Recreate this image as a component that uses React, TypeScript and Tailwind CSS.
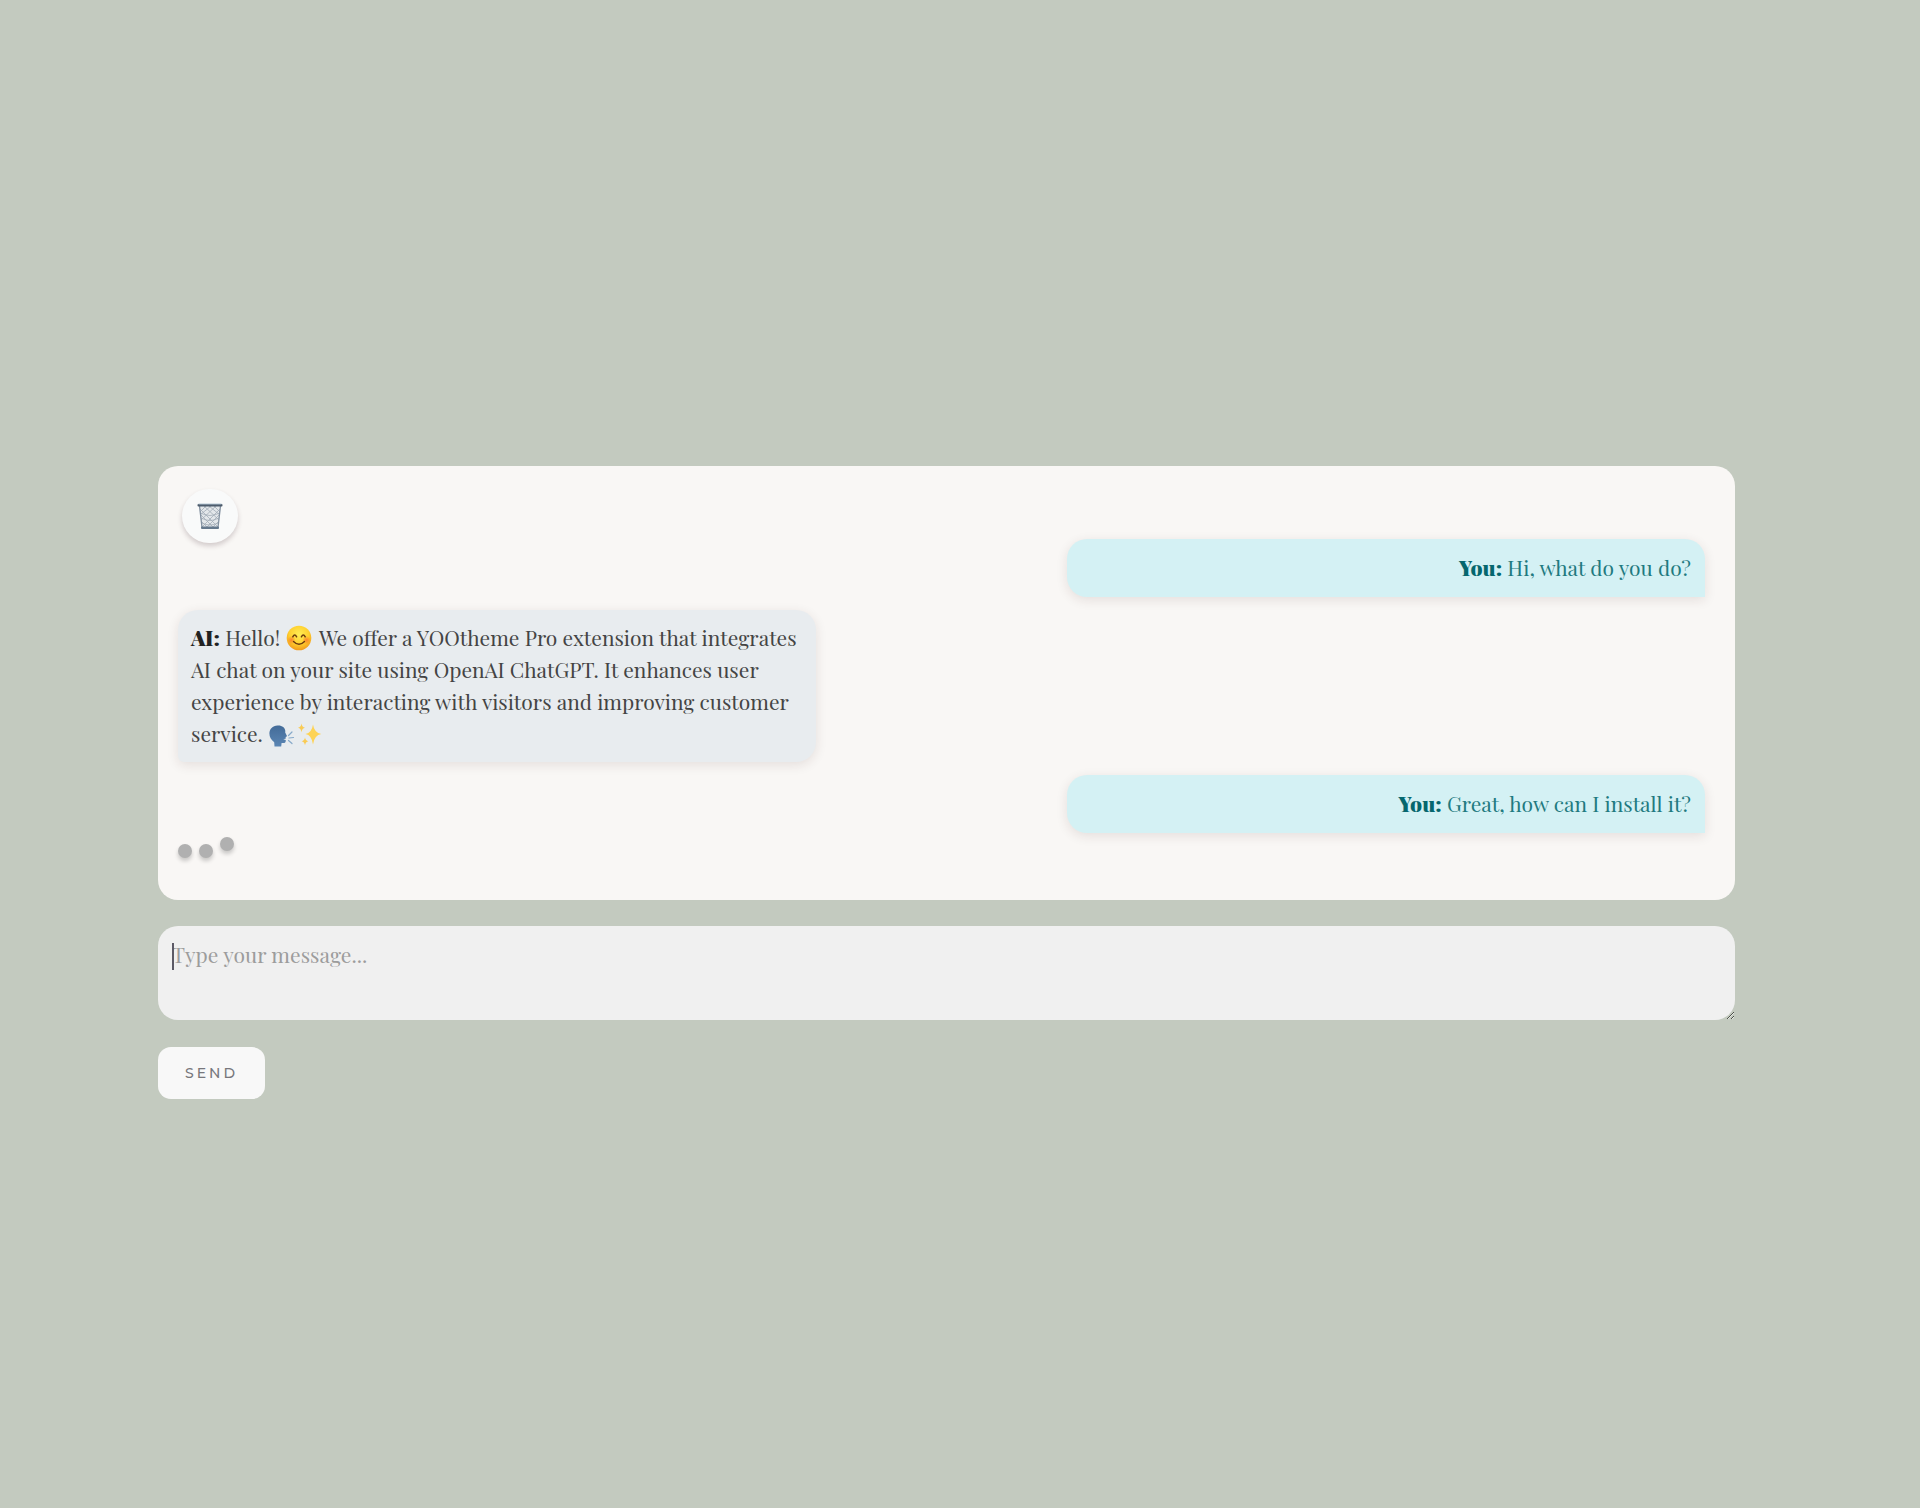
import React from "react";

function TrashIcon() {
  return (
    <svg viewBox="0 0 26 27" className="h-[27px] w-[26px]" aria-hidden="true">
      <path d="M2 2.500 5 25h16l3-22.500Z" fill="#e3e7ea" />
      <g fill="none" stroke="#a3adb7" strokeWidth="0.8">
        <path d="M3 6 21 24M7 3l15 14M12 3l11 9M17 3l6 6M4 12l12 12M5 19l6 6" />
        <path d="M23 6 5 24M19 3 4 17M14 3 3 12M9 3 3 9M22 12 10 24M21 19l-6 6" />
        <path d="M3.500 10q9.500 5 19 0M4.200 15q8.800 5 17.600 0M4.800 20q8.200 4 16.400 0" />
      </g>
      <path d="M2.500 3 5 24.500M23.500 3 21 24.500" stroke="#8492a1" strokeWidth="1.300" />
      <rect x="0.500" y="1" width="25" height="2.600" rx="1" fill="#4d5c6c" />
      <rect x="1.500" y="0.600" width="23" height="0.900" fill="#a9bccb" />
      <rect x="4" y="23.600" width="18" height="2.500" rx="1" fill="#64788c" />
    </svg>
  );
}

function SmileEmoji() {
  return (
    <svg viewBox="0 0 26 26" className="mr-0.5 ml-px inline-block h-[26px] w-[26px] align-[-5px]" role="img" aria-label="smiling face">
      <defs>
        <radialGradient id="face" cx="0.5" cy="0.35" r="0.65">
          <stop offset="0" stopColor="#ffed55" />
          <stop offset="0.6" stopColor="#ffd02f" />
          <stop offset="1" stopColor="#f29a1b" />
        </radialGradient>
        <radialGradient id="cheek">
          <stop offset="0" stopColor="#fb6a2c" stopOpacity="0.75" />
          <stop offset="1" stopColor="#fb6a2c" stopOpacity="0" />
        </radialGradient>
      </defs>
      <circle cx="13" cy="13" r="12.3" fill="url(#face)" />
      <circle cx="5.500" cy="15" r="4.200" fill="url(#cheek)" />
      <circle cx="20.500" cy="15" r="4.200" fill="url(#cheek)" />
      <g fill="none" stroke="#6b3a0e" strokeLinecap="round">
        <path d="M6.800 11.800q1.900-3.600 3.800 0M15.400 11.800q1.900-3.600 3.800 0" strokeWidth="1.500" />
        <path d="M7.500 16.500q5.500 5.600 11 0" strokeWidth="1.400" />
      </g>
    </svg>
  );
}

function SpeakingHeadEmoji() {
  return (
    <svg viewBox="0 0 26 22" className="mr-0.5 ml-px inline-block h-[22px] w-[26px] align-[-5px]" role="img" aria-label="speaking head">
      <defs>
        <linearGradient id="head" x1="0" y1="0" x2="0" y2="1">
          <stop offset="0" stopColor="#436b98" />
          <stop offset="1" stopColor="#5b86b4" />
        </linearGradient>
      </defs>
      <path
        d="M8.500.5C13 .2 16 2.500 16.300 6l-.1 1.500 1.700 3.200c.2.500 0 .8-.6 1l-.7.200.3 1.500-2.600.8 2.500.8-.2 1.800c-.3 1.200-1.400 1.300-4 1.100l-.4 3.700H5.500l-.3-4.300C2 14.800.4 12 .4 8.600.4 4 3.600.8 8.500.5Z"
        fill="url(#head)"
      />
      <g fill="none" stroke="#86a9c9" strokeLinecap="round" strokeWidth="1.200">
        <path d="m19.500 10.500 3.500-3.500M20 13l4.500-.5M19.500 15.500l3.500 3" />
      </g>
    </svg>
  );
}

function SparklesEmoji() {
  return (
    <svg viewBox="0 0 25 23" className="inline-block h-[23px] w-[25px] align-[-4px]" role="img" aria-label="sparkles">
      <path d="M16 1.500q1.200 8.300 8.300 9.500-7.100 1.200-8.300 10.500Q14.800 12.200 8.500 11 14.800 9.800 16 1.500Z" fill="#fdd356" />
      <path d="M4.500.5q.6 3.800 3.500 4.300-2.900.5-3.500 4.400Q3.900 5.300 1 4.800 3.900 4.300 4.500.5Z" fill="#f9cb55" />
      <path d="M8 14.500q.6 3.300 3.300 3.800-2.700.5-3.300 3.900-.6-3.400-3.300-3.900 2.700-.5 3.300-3.800Z" fill="#f9cb55" />
    </svg>
  );
}

function UserMessage({ children }: { children: React.ReactNode }) {
  return (
    <div className="w-[41.8%] self-end rounded-[20px] rounded-br-none bg-[#d4f1f4] px-[14px] pt-3 pb-[14px] text-right text-[#1f7a80] shadow-[0_3px_12px_rgba(60,30,30,0.11)]">
      <strong className="font-black text-[#05676e]">You:</strong> {children}
    </div>
  );
}

export default function App() {
  return (
    <main className="flex min-h-screen flex-col items-stretch bg-[#c3cabf] pt-[466px] pr-[185px] pl-[158px] font-['Playfair_Display','Liberation_Serif',serif] text-[21px] leading-8">
      <section aria-label="Conversation" className="flex flex-col gap-[13px] rounded-[20px] bg-[#f9f7f5] pt-[23px] pr-[30px] pb-[42px] pl-5">
        <div className="flex h-[37px] items-start pl-1">
          <button
            type="button"
            aria-label="Clear conversation"
            className="flex h-[54px] w-14 shrink-0 items-center justify-center rounded-full bg-[#f9fafa] shadow-[0_3px_5px_rgba(60,30,40,0.2)]"
          >
            <TrashIcon />
          </button>
        </div>
        <UserMessage>Hi, what do you do?</UserMessage>
        <div className="w-[41.8%] self-start rounded-[20px] rounded-bl-[6px] bg-[#e8ecef] pt-[11px] pr-3 pb-[13px] pl-[13px] text-[#444444] shadow-[0_3px_12px_rgba(60,30,30,0.11)]">
          <strong className="font-black text-[#222222]">AI:</strong> Hello! <SmileEmoji /> We offer a YOOtheme Pro extension that integrates AI chat on your site using OpenAI ChatGPT. It enhances user experience by interacting with visitors and improving customer service. <SpeakingHeadEmoji />
          <SparklesEmoji />
        </div>
        <UserMessage>Great, how can I install it?</UserMessage>
        <div role="status" aria-label="AI is typing" className="flex h-3 items-end gap-[7px]">
          <span className="size-[14px] rounded-full bg-[#b0b0b0] shadow-[0_3px_4px_rgba(0,0,0,0.2)]" />
          <span className="size-[14px] rounded-full bg-[#b0b0b0] shadow-[0_3px_4px_rgba(0,0,0,0.2)]" />
          <span className="mb-[7px] size-[14px] rounded-full bg-[#b0b0b0] shadow-[0_3px_4px_rgba(0,0,0,0.2)]" />
        </div>
      </section>
      <form className="mt-[26px] flex flex-col items-start gap-[27px]" onSubmit={(e) => e.preventDefault()}>
        <div className="relative flex w-full">
          <textarea
            aria-label="Message"
            placeholder="Type your message..."
            className="h-[94px] w-full resize-y rounded-[20px] bg-[#f0f0f0] px-[14px] py-3 text-[#444444] outline-none placeholder:text-[#9c9c9c]"
          />
          <span aria-hidden="true" className="absolute top-[17px] left-[14px] h-[27px] w-[2px] bg-[#5c5a66]" />
        </div>
        <button type="submit" className="h-[52px] rounded-[13px] bg-[#f8f8f8] px-[27px] font-['Montserrat','Inter',sans-serif] text-[14px] leading-5 font-medium tracking-[3px] text-[#77777c]">
          SEND
        </button>
      </form>
    </main>
  );
}
